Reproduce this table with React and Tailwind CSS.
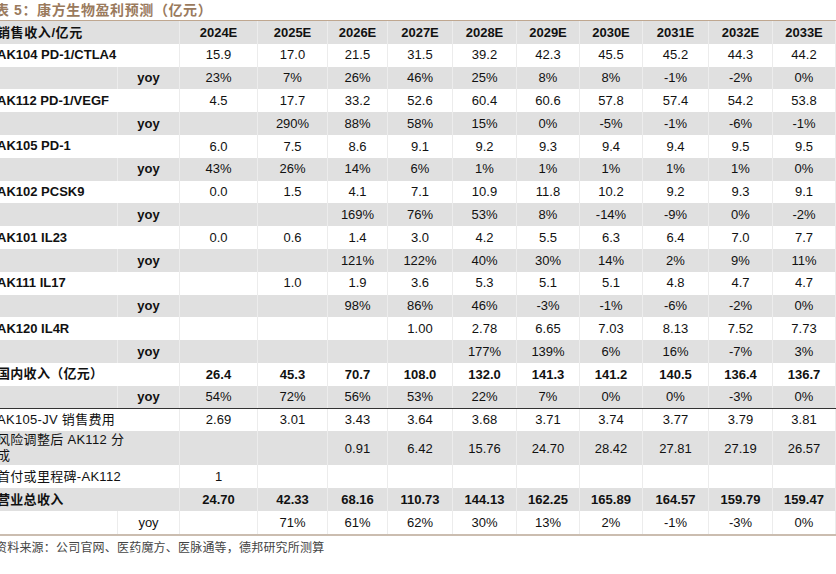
import React from "react";

const cols =
  "grid grid-cols-[123px_62px_78px_70px_60px_65px_64px_63px_63px_66px_64px_63px]";

const years = ["2024E", "2025E", "2026E", "2027E", "2028E", "2029E", "2030E", "2031E", "2032E", "2033E"];

const rows = [
  { label: "AK104 PD-1/CTLA4", bold: true, values: ["15.9", "17.0", "21.5", "31.5", "39.2", "42.3", "45.5", "45.2", "44.3", "44.2"] },
  { yoy: true, yoyBold: true, values: ["23%", "7%", "26%", "46%", "25%", "8%", "8%", "-1%", "-2%", "0%"] },
  { label: "AK112 PD-1/VEGF", bold: true, values: ["4.5", "17.7", "33.2", "52.6", "60.4", "60.6", "57.8", "57.4", "54.2", "53.8"] },
  { yoy: true, yoyBold: true, values: ["", "290%", "88%", "58%", "15%", "0%", "-5%", "-1%", "-6%", "-1%"] },
  { label: "AK105 PD-1", bold: true, values: ["6.0", "7.5", "8.6", "9.1", "9.2", "9.3", "9.4", "9.4", "9.5", "9.5"] },
  { yoy: true, yoyBold: true, values: ["43%", "26%", "14%", "6%", "1%", "1%", "1%", "1%", "1%", "0%"] },
  { label: "AK102 PCSK9", bold: true, values: ["0.0", "1.5", "4.1", "7.1", "10.9", "11.8", "10.2", "9.2", "9.3", "9.1"] },
  { yoy: true, yoyBold: true, values: ["", "", "169%", "76%", "53%", "8%", "-14%", "-9%", "0%", "-2%"] },
  { label: "AK101 IL23", bold: true, values: ["0.0", "0.6", "1.4", "3.0", "4.2", "5.5", "6.3", "6.4", "7.0", "7.7"] },
  { yoy: true, yoyBold: true, values: ["", "", "121%", "122%", "40%", "30%", "14%", "2%", "9%", "11%"] },
  { label: "AK111 IL17", bold: true, values: ["", "1.0", "1.9", "3.6", "5.3", "5.1", "5.1", "4.8", "4.7", "4.7"] },
  { yoy: true, yoyBold: true, values: ["", "", "98%", "86%", "46%", "-3%", "-1%", "-6%", "-2%", "0%"] },
  { label: "AK120 IL4R", bold: true, values: ["", "", "", "1.00", "2.78", "6.65", "7.03", "8.13", "7.52", "7.73"] },
  { yoy: true, yoyBold: true, values: ["", "", "", "", "177%", "139%", "6%", "16%", "-7%", "3%"] },
  { label: "国内收入（亿元）", cjk: true, bold: true, valBold: true, values: ["26.4", "45.3", "70.7", "108.0", "132.0", "141.3", "141.2", "140.5", "136.4", "136.7"] },
  { yoy: true, yoyBold: true, values: ["54%", "72%", "56%", "53%", "22%", "7%", "0%", "0%", "-3%", "0%"], rule: true },
  { label: "AK105-JV 销售费用", cjk: true, values: ["2.69", "3.01", "3.43", "3.64", "3.68", "3.71", "3.74", "3.77", "3.79", "3.81"] },
  { label: "风险调整后 AK112 分", label2: "成", cjk: true, tall: true, values: ["", "", "0.91", "6.42", "15.76", "24.70", "28.42", "27.81", "27.19", "26.57"] },
  { label: "首付或里程碑-AK112", cjk: true, values: ["1", "", "", "", "", "", "", "", "", ""] },
  { label: "营业总收入", cjk: true, bold: true, valBold: true, values: ["24.70", "42.33", "68.16", "110.73", "144.13", "162.25", "165.89", "164.57", "159.79", "159.47"] },
  { yoy: true, values: ["", "71%", "61%", "62%", "30%", "13%", "2%", "-1%", "-3%", "0%"] },
];

function Row({ row, gray }) {
  const bg = gray ? "bg-[#e0e0e0]" : "bg-white";
  const h = row.tall ? "h-[34px]" : "h-[22.8px]";
  const rule = row.rule ? "border-b border-[#333333]" : "";
  return (
    <div className={`${cols} ${bg} ${h} ${rule} text-[13px] text-[#111]`}>
      <div
        className={`col-span-2 flex flex-col justify-center pl-[2px] leading-[16px] whitespace-nowrap border-r border-[#ececec] ${
          row.bold ? "font-bold" : ""
        } ${row.cjk ? "tracking-[0.3px]" : ""}`}
      >
        <span>{row.label}</span>
        {row.label2 && <span>{row.label2}</span>}
      </div>
      {row.values.map((v, i) => (
        <div
          key={i}
          className={`flex items-center justify-center border-r border-[#ececec] ${row.valBold ? "font-bold" : ""}`}
        >
          {v}
        </div>
      ))}
    </div>
  );
}

function YoyRow({ row, gray }) {
  const bg = gray ? "bg-[#e0e0e0]" : "bg-white";
  const rule = row.rule ? "border-b border-[#333333]" : "";
  return (
    <div className={`${cols} ${bg} h-[22.8px] ${rule} text-[13px] text-[#111]`}>
      <div className="border-r border-[#ececec]" />
      <div
        className={`flex items-center justify-center border-r border-[#ececec] ${row.yoyBold ? "font-bold" : ""}`}
      >
        yoy
      </div>
      {row.values.map((v, i) => (
        <div key={i} className="flex items-center justify-center border-r border-[#ececec]">
          {v}
        </div>
      ))}
    </div>
  );
}

export default function App() {
  return (
    <div
      className="w-[836px] h-[574px] overflow-hidden bg-white"
      style={{ fontFamily: '"Liberation Sans", Arial, "Noto Sans CJK SC", sans-serif' }}
    >
      <div className="w-[841px] -ml-[5px]">
        <div className="h-[21px] flex items-center text-[14px] font-bold text-[#9a7a5d] tracking-[0.6px] border-b border-[#bfa790]">
          表 5：康方生物盈利预测（亿元）
        </div>
        <div className={`${cols} bg-[#e0e0e0] h-[22.8px] text-[13px] font-bold text-[#111]`}>
          <div className="col-span-2 flex items-center pl-[2px] tracking-[0.6px] border-r border-[#ececec]">
            销售收入/亿元
          </div>
          {years.map((y) => (
            <div key={y} className="flex items-center justify-center border-r border-[#ececec]">
              {y}
            </div>
          ))}
        </div>
        {rows.map((row, i) =>
          row.yoy ? (
            <YoyRow key={i} row={row} gray={i % 2 === 1} />
          ) : (
            <Row key={i} row={row} gray={i % 2 === 1} />
          )
        )}
        <div className="border-t-2 border-[#cbbdb0]" />
        <div className="h-[25px] flex items-center text-[12px] text-[#444] tracking-[0.2px]">
          资料来源：公司官网、医药魔方、医脉通等，德邦研究所测算
        </div>
      </div>
    </div>
  );
}
